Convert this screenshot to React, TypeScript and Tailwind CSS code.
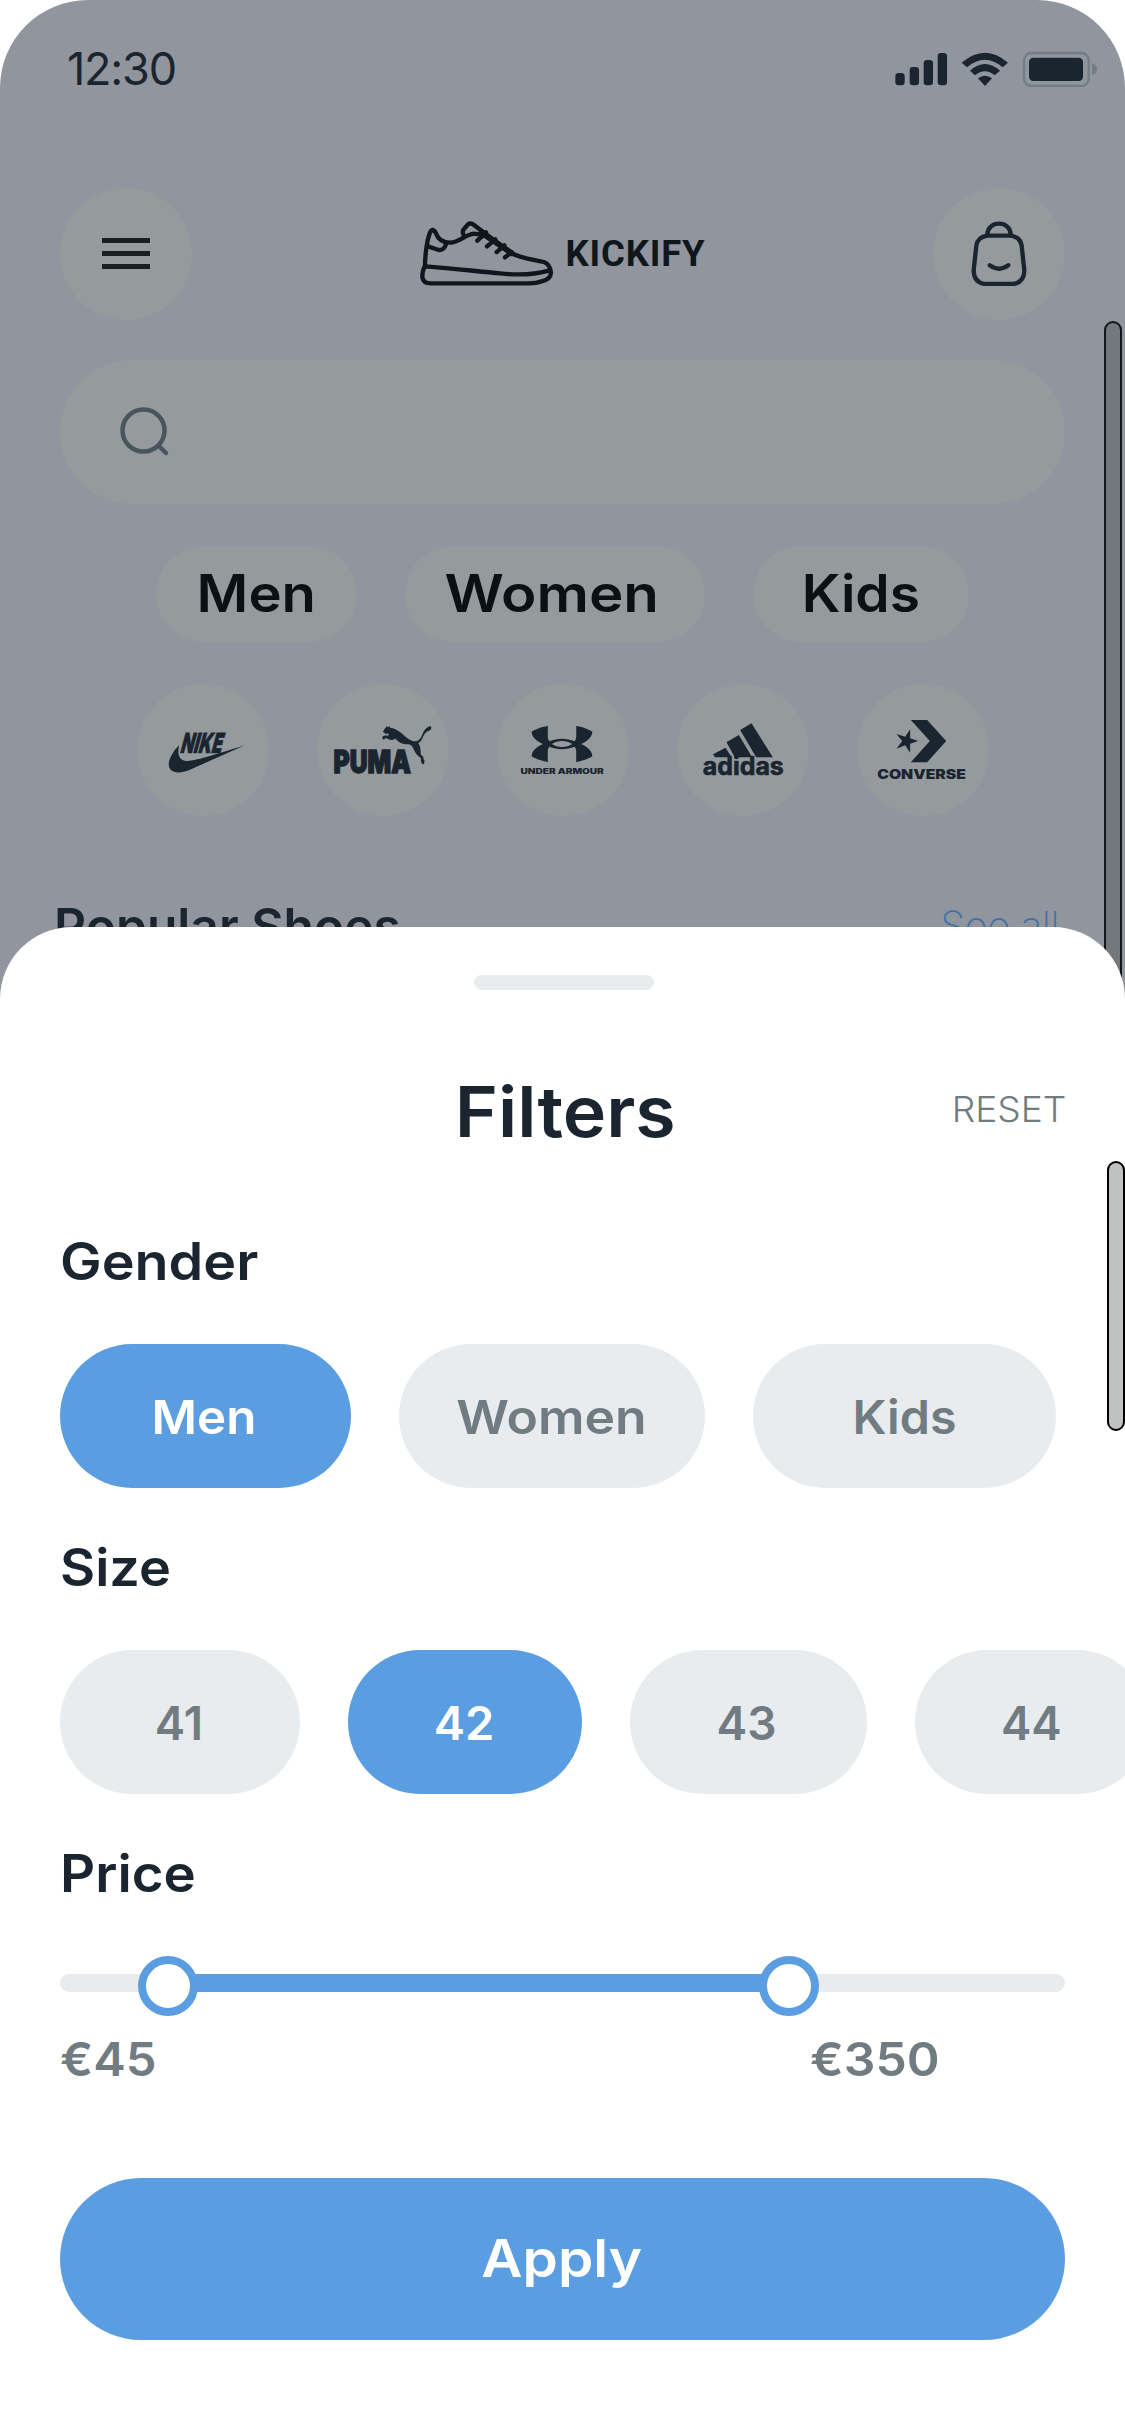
import { SiPuma, SiUnderarmour } from 'react-icons/si';
import type { ReactNode } from 'react';

function StatusIcons() {
  return (
    <svg viewBox="105 60 608 108" className="h-9 w-[202.7px]" fill="#1a252f">
      <rect x="106" y="126" width="28" height="37" rx="10" />
      <rect x="149" y="108" width="28" height="55" rx="10" />
      <rect x="191" y="87" width="28" height="76" rx="10" />
      <rect x="233" y="66" width="28" height="97" rx="10" />
      <path d="M305 95Q375 35 444 95L428 109Q375 64 321 109Z" />
      <path d="M330 119Q375 79 420 119L404 133Q375 109 345 133Z" />
      <path d="M354 142Q375 126 396 142L375 165Z" />
      <rect x="492" y="66" width="194" height="99" rx="22" fill="none" stroke="#727e84" strokeWidth="7" />
      <rect x="507" y="80" width="162" height="70" rx="13" />
      <path d="M696 97Q711 102 711 115Q711 128 696 133Z" fill="#727e84" />
    </svg>
  );
}

function ShoeLogo() {
  return (
    <svg
      viewBox="60 90 402 200"
      className="h-[66.7px] w-[134px]"
      fill="none"
      stroke="#10171b"
      strokeWidth="13"
      strokeLinecap="round"
      strokeLinejoin="round"
    >
      <path d="M75 228C75 200 80 152 90 128Q97 112 107 128C115 150 130 158 150 158C178 158 195 134 222 131Q236 131 248 138" />
      <path d="M190 133Q186 124 192 117L204 103Q212 97 221 104L330 187C360 205 410 211 432 216Q450 222 453 248Q452 268 425 274Q408 280 388 280L92 280Q70 280 67 262Q67 240 75 228" />
      <path d="M75 229C160 235 240 245 300 250C360 257 410 252 450 241" />
      <path d="M82 168Q100 175 116 180Q132 181 138 163" />
      <path d="M244 128L336 190" strokeWidth="17" />
      <path d="M258 127L232 152M286 148L261 169M313 166L290 186M335 187L315 202" />
    </svg>
  );
}

function BagIcon() {
  return (
    <svg
      viewBox="213 122 168 197"
      className="h-[65.7px] w-14"
      fill="none"
      stroke="#1a252f"
      strokeWidth="13"
      strokeLinecap="round"
    >
      <path d="M262 166H332Q361 170 365 196L373 270Q373 306 340 311H254Q221 306 221 270L229 196Q233 170 262 166Z" />
      <path d="M262 163C262 142 278 130 297 130S332 142 332 163" />
      <path d="M269 255Q297 275 325 255" />
    </svg>
  );
}

function MenuIcon() {
  return (
    <div className="flex w-12 flex-col gap-2">
      <div className="h-[5px] bg-[#1a2022]" />
      <div className="h-[5px] bg-[#1a2022]" />
      <div className="h-[5px] bg-[#1a2022]" />
    </div>
  );
}

function SearchIcon() {
  return (
    <svg viewBox="0 0 50 50" className="size-[50px]" fill="none" stroke="#48555e" strokeWidth="4.5" strokeLinecap="round">
      <circle cx="23.5" cy="23.5" r="21" />
      <path d="M39 39L46 46" />
    </svg>
  );
}

function RoundButton({ children }: { children: ReactNode }) {
  return <div className="flex size-[132px] items-center justify-center rounded-full bg-[#959a9d]">{children}</div>;
}

function Brand({ viewBox, children }: { viewBox: string; children: ReactNode }) {
  return (
    <div className="size-[132px] rounded-full bg-[#959a9d] text-[#1a252f]">
      <svg viewBox={viewBox} className="size-full font-[Inter,sans-serif] font-black" fill="currentColor">
        {children}
      </svg>
    </div>
  );
}

function Brands() {
  return (
    <div className="mt-[42px] flex justify-center gap-12">
      <Brand viewBox="49.5 42 396 396">
        <path d="M176 226C168 262 182 273 202 273C226 272 270 258 373 226L215 296C160 322 130 300 152 258Q160 240 176 226Z" />
        <text
          x="0"
          y="0"
          fontSize="83"
          textLength="124"
          lengthAdjust="spacingAndGlyphs"
          transform="translate(177 250) skewX(-15)"
          stroke="currentColor"
          strokeWidth="2"
        >
          NIKE
        </text>
      </Brand>
      <Brand viewBox="589.5 42 396 396">
        <SiPuma x="785" y="151.5" size={148} />
        <text
          x="639"
          y="310"
          fontSize="93"
          textLength="232"
          lengthAdjust="spacingAndGlyphs"
          stroke="currentColor"
          strokeWidth="4"
        >
          PUMA
        </text>
      </Brand>
      <Brand viewBox="79.5 42 396 396">
        <SiUnderarmour x="183" y="130.5" size={183} />
        <text x="150" y="312" fontSize="22" textLength="250" lengthAdjust="spacingAndGlyphs">
          UNDER ARMOUR
        </text>
      </Brand>
      <Brand viewBox="619.5 42 396 396">
        <path d="M809 180L843 160L907 262H857ZM768 217L805 195L845 262H793ZM728 253L765 233L783 262H733Z" />
        <text
          x="697"
          y="316"
          fontSize="77"
          textLength="243"
          lengthAdjust="spacingAndGlyphs"
          className="font-bold"
          stroke="currentColor"
          strokeWidth="2"
        >
          adidas
        </text>
      </Brand>
      <Brand viewBox="109.5 42 396 396">
        <path d="M271 150H320L377 213L320 277H271L328 213Z" />
        <path d="M293 213L269 221V248L254 226L228 236L245 213L228 192L254 200L269 178V205Z" />
        <text x="170" y="326" fontSize="41" textLength="266" lengthAdjust="spacingAndGlyphs">
          CONVERSE
        </text>
      </Brand>
    </div>
  );
}

function HomeScreen() {
  return (
    <div className="h-[1100px] overflow-hidden rounded-t-[88px] bg-[#91959d]">
      <div className="flex h-[137px] items-center justify-between pr-[27.3px] pl-[67px]">
        <span className="text-[45px] font-[370] tracking-[-1.2px] text-[#1a252f]">12:30</span>
        <StatusIcons />
      </div>

      <div className="mt-[50.5px] flex items-center justify-between px-[60px]">
        <RoundButton>
          <MenuIcon />
        </RoundButton>
        <div className="flex items-center gap-3">
          <ShoeLogo />
          <span className="w-[140px] pt-0.5 font-[Roboto,sans-serif] text-[36.5px] font-bold tracking-[0.8px] text-[#10171b]">
            KICKIFY
          </span>
        </div>
        <RoundButton>
          <BagIcon />
        </RoundButton>
      </div>

      <div className="mx-[60px] mt-[40.5px] flex h-36 items-center rounded-full bg-[#959a9d] pl-[60px]">
        <SearchIcon />
      </div>

      <div className="mt-[42px] flex h-24 gap-12 pl-[156px] text-[52px] leading-none font-semibold text-[#0a1014] *:flex *:items-center *:justify-center *:rounded-full *:bg-[#959a9d]">
        <div className="w-[201px]">
          <span className="scale-x-108">Men</span>
        </div>
        <div className="w-[300px]">
          <span className="-ml-1.5 scale-x-112">Women</span>
        </div>
        <div className="w-[216px]">
          <span className="scale-x-106">Kids</span>
        </div>
      </div>

      <Brands />

      <div className="mt-20 flex items-center justify-between pr-[66px] pl-[54px]">
        <span className="text-[49.7px] leading-[60px] font-semibold text-[#1a252f]">Popular Shoes</span>
        <span className="text-[40px] leading-[60px] font-[150] tracking-[-0.4px] text-[#3f72a6]">See all</span>
      </div>
    </div>
  );
}

function SectionTitle({ children }: { children: ReactNode }) {
  return (
    <h2 className="mt-[49px] h-[62px] pl-[60px] text-[52px] leading-[62px] font-semibold text-[#1a252f]">{children}</h2>
  );
}

function Chip({ className, active, children }: { className: string; active?: boolean; children: ReactNode }) {
  return (
    <button
      className={`flex h-36 shrink-0 items-center justify-center rounded-full text-[47px] leading-none font-semibold ${
        active ? 'bg-[#5b9de1] text-white' : 'bg-[#e8ecef] text-[#717c82]'
      } ${className}`}
    >
      {children}
    </button>
  );
}

function PriceSlider() {
  return (
    <div className="mt-[51px] px-[60px]">
      <div className="relative h-[60px] pt-[18px]">
        <div className="h-[18px] rounded-full bg-[#e8ecef] pr-[276px] pl-[108px]">
          <div className="h-full bg-[#5b9de1]" />
        </div>
        <div className="absolute top-0 left-[78px] size-[60px] rounded-full border-8 border-[#5b9de1] bg-white" />
        <div className="absolute top-0 left-[699px] size-[60px] rounded-full border-8 border-[#5b9de1] bg-white" />
      </div>
      <div className="mt-[15px] grid h-14 grid-cols-[750px_1fr] text-[47px] leading-[56px] font-semibold text-[#717c82]">
        <span className="w-fit origin-left scale-x-104">€45</span>
        <span className="w-fit origin-left scale-x-106">€350</span>
      </div>
    </div>
  );
}

function FilterSheet() {
  return (
    <div className="absolute inset-x-0 bottom-0 flex h-[1509px] flex-col overflow-hidden rounded-t-[72px] bg-white">
      <div className="mt-12 ml-[474px] h-[15px] w-[180px] shrink-0 rounded-full bg-[#e8ecef]" />

      <div className="mt-20 grid h-[84px] grid-cols-[1fr_auto_1fr] items-center px-[60px]">
        <span />
        <h1 className="ml-[5px] scale-x-105 text-[70px] leading-[84px] font-semibold text-[#1a252f]">Filters</h1>
        <span className="-mr-px mb-1.5 origin-right scale-x-103 justify-self-end text-[36px] font-light text-[#717c82]">
          RESET
        </span>
      </div>

      <div className="mt-7">
        <SectionTitle>
          <span className="inline-block origin-left scale-x-107">Gender</span>
        </SectionTitle>
      </div>
      <div className="mt-[51px] flex gap-12 pl-[60px]">
        <Chip active className="w-[291px]">
          <span className="-ml-1 scale-x-105">Men</span>
        </Chip>
        <Chip className="w-[306px]">
          <span className="scale-x-110">Women</span>
        </Chip>
        <Chip className="w-[303px]">
          <span className="scale-x-103">Kids</span>
        </Chip>
      </div>

      <SectionTitle>
        <span className="inline-block origin-left scale-x-104">Size</span>
      </SectionTitle>
      <div className="mt-[51px] flex gap-12 pl-[60px]">
        <Chip className="w-60">
          <span className="-ml-0.5 scale-x-97">41</span>
        </Chip>
        <Chip active className="w-[234px]">
          <span className="-ml-0.5">42</span>
        </Chip>
        <Chip className="w-[237px]">
          <span className="-ml-1 scale-x-98">43</span>
        </Chip>
        <Chip className="w-[234px]">
          <span className="-ml-0.5 scale-x-97">44</span>
        </Chip>
      </div>

      <SectionTitle>
        <span className="inline-block origin-left scale-x-105">Price</span>
      </SectionTitle>
      <PriceSlider />

      <button className="mx-[60px] mt-[91px] flex h-[162px] shrink-0 items-center justify-center rounded-full bg-[#5b9de1] text-[52px] leading-none font-semibold text-white">
        <span className="-ml-0.5 scale-x-109">Apply</span>
      </button>
    </div>
  );
}

export default function App() {
  return (
    <div className="relative h-[2436px] w-[1125px] overflow-hidden bg-white font-[Inter,sans-serif]">
      <HomeScreen />
      <div className="absolute top-[321px] left-[1104px] h-[760px] w-[18px] rounded-full border-2 border-[#12171a] bg-[#72787b]" />
      <FilterSheet />
      <div className="absolute top-[1161px] left-[1107px] h-[270px] w-[18px] rounded-full border-2 border-black bg-[#c0c2c2]" />
    </div>
  );
}
